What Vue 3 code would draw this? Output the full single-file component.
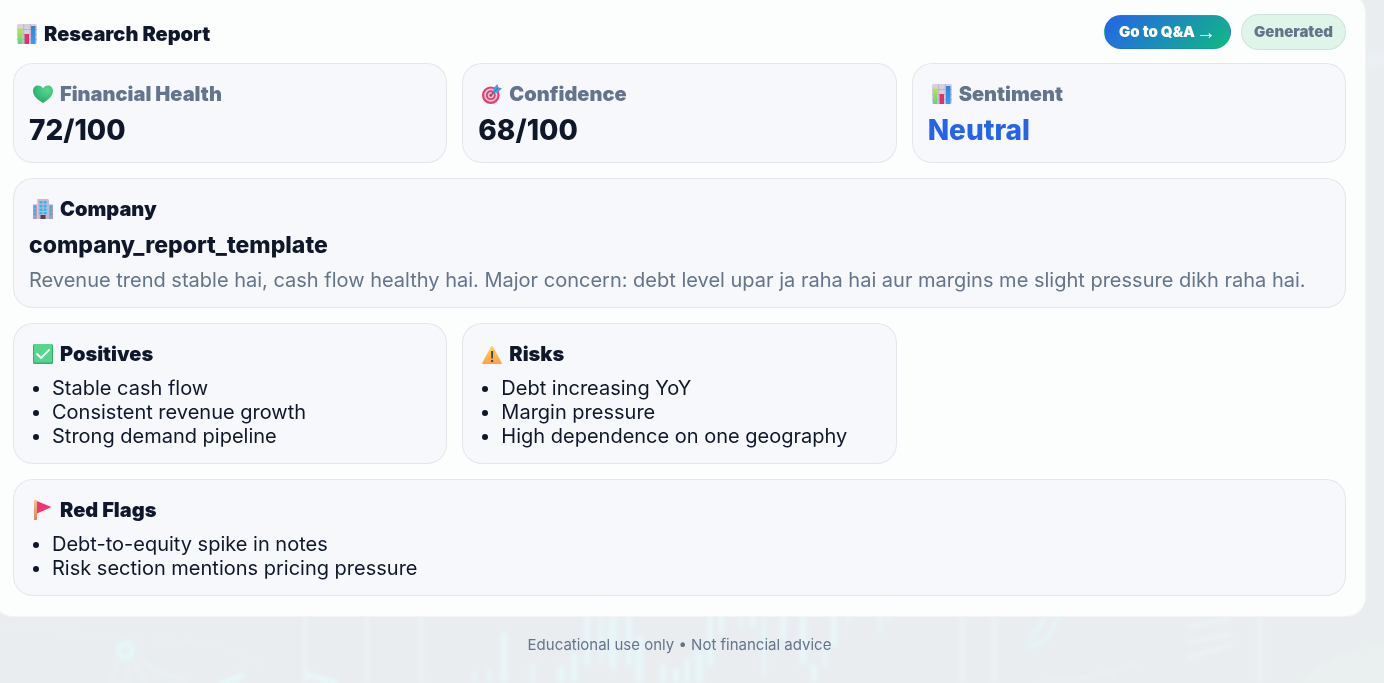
<script setup>
const metrics = [
  { icon: 'heart', label: 'Financial Health', value: '72/100' },
  { icon: 'target', label: 'Confidence', value: '68/100' },
  { icon: 'chart', label: 'Sentiment', value: 'Neutral', accent: true },
]
const lists = [
  { icon: 'check', title: 'Positives', items: ['Stable cash flow', 'Consistent revenue growth', 'Strong demand pipeline'] },
  { icon: 'warning', title: 'Risks', items: ['Debt increasing YoY', 'Margin pressure', 'High dependence on one geography'] },
  { icon: 'flag', title: 'Red Flags', items: ['Debt-to-equity spike in notes', 'Risk section mentions pricing pressure'], wide: true },
]
// x, top, height, width of each candlestick in the backdrop
const candles = [
  [474, 672, 11, 5], [489, 668, 15, 4], [504, 632, 51, 7], [533, 662, 21, 5], [561, 665, 18, 8], [574, 654, 29, 7],
  [587, 596, 70, 6], [601, 600, 64, 5], [613, 615, 55, 8], [629, 606, 60, 6], [639, 636, 47, 8], [663, 664, 19, 7],
  [676, 668, 15, 7], [687, 658, 25, 6], [699, 652, 31, 8], [710, 596, 70, 6], [721, 598, 36, 6], [741, 600, 30, 4],
  [753, 608, 20, 7], [764, 617, 60, 4], [783, 596, 44, 7], [803, 615, 50, 7], [814, 664, 19, 7], [825, 642, 26, 5],
  [834, 604, 42, 7], [880, 596, 36, 5], [848, 598, 24, 4], [890, 600, 22, 4],
]
</script>

<template>
  <div class="page">
    <svg class="defs" width="0" height="0" aria-hidden="true">
      <defs>
        <linearGradient id="gGreen" x1="0" y1="0" x2="0" y2="1"><stop offset="0" stop-color="#b5e550" /><stop offset="1" stop-color="#58d68d" /></linearGradient>
        <linearGradient id="gBlue" x1="0" y1="0" x2="0" y2="1"><stop offset="0" stop-color="#2b86d4" /><stop offset="1" stop-color="#3b9bf0" /></linearGradient>
        <radialGradient id="gHeart" cx="0.7" cy="0.25" r="0.8"><stop offset="0" stop-color="#5fd08a" /><stop offset="0.5" stop-color="#3fc380" /><stop offset="1" stop-color="#2ba66b" /></radialGradient>
        <linearGradient id="gWarn" x1="0" y1="0" x2="0" y2="1"><stop offset="0" stop-color="#fdd64b" /><stop offset="1" stop-color="#fda050" /></linearGradient>
        <linearGradient id="gPole" x1="0" y1="0" x2="0" y2="1"><stop offset="0" stop-color="#f7c09a" /><stop offset="1" stop-color="#dc8460" /></linearGradient>
        <symbol id="i-chart" viewBox="0 0 20 20">
          <rect width="20" height="20" rx="2" fill="#d8d0de" />
          <path d="M0 5.500h20M0 10.500h20M0 15.500h20M6.700 0v20M13.300 0v20" stroke="#b5a9bd" stroke-width=".7" />
          <rect x="1" y="4.500" width="4.500" height="15.500" fill="url(#gGreen)" />
          <rect x="7.500" y="10" width="4.500" height="10" fill="#e2306e" />
          <rect x="14" y="2" width="4.500" height="18" fill="url(#gBlue)" />
        </symbol>
        <symbol id="i-heart" viewBox="0 0 20 20">
          <path d="M10 19C5 16 0 12 0 7 0 3.500 2.400 1.500 5 1.500c2.200 0 4 1.100 5 3 1-1.900 2.800-3 5-3 2.600 0 5 2 5 5.500 0 5-5 9-10 12Z" fill="url(#gHeart)" />
        </symbol>
        <symbol id="i-target" viewBox="0 0 20 20">
          <circle cx="8.800" cy="11.200" r="8.800" fill="#e4406f" />
          <circle cx="8.800" cy="11.200" r="6.600" fill="#dcc9dc" />
          <circle cx="8.800" cy="11.200" r="4.900" fill="#e4406f" />
          <circle cx="8.800" cy="11.200" r="3" fill="#dcc9dc" />
          <circle cx="8.800" cy="11.200" r="1.500" fill="#d43a68" />
          <path d="M9 11l5-5" stroke="#4b5f8d" stroke-width="1.200" />
          <path d="M11.500 8.500V4.200L15.500 0l.8 3.500 3.700.8-4.200 4.200Z" fill="#3c9fe8" />
          <path d="M12.500 7.500l4-4" stroke="#2375c4" stroke-width=".8" />
        </symbol>
        <symbol id="i-building" viewBox="0 0 20 20">
          <path d="M0 5h5v15H0ZM15 5h5v15h-5Z" fill="#a99eb5" />
          <path d="M4 1.500Q4 0 5.500 0h9Q16 0 16 1.500V20H4Z" fill="#c2b9cb" />
          <path d="M0 5h4v1H0ZM16 5h4v1h-4ZM4 0h1v20H4Z" fill="#d7cedd" />
          <path d="M6.500 2h3v2.600h-3ZM10.600 2h3v2.600h-3ZM6.500 5.800h3v2.600h-3ZM10.600 5.800h3v2.600h-3ZM6.500 9.500h3v2.500h-3ZM10.600 9.500h3v2.500h-3ZM6.500 13h3v2.200h-3ZM10.600 13h3v2.200h-3ZM.800 7h2.200v2.200H.800ZM.800 10.500h2.200v2.200H.800ZM.800 14h2.200v2.200H.800ZM17 7h2.200v2.200H17ZM17 10.500h2.200v2.200H17ZM17 14h2.200v2.200H17Z" fill="#2fb7f5" />
          <rect x="7.500" y="16" width="5" height="4" fill="#5b4052" />
        </symbol>
        <symbol id="i-check" viewBox="0 0 20 20">
          <rect width="20" height="20" rx="1.500" fill="#3cab72" />
          <rect x="1" y="0" width="18" height="18.500" rx="1" fill="#55d68c" />
          <path d="M3.500 9.500l4.500 4.500L16.500 5.500" fill="none" stroke="#fff" stroke-width="1.800" />
        </symbol>
        <symbol id="i-warning" viewBox="0 0 20 20">
          <path d="M10 2Q10.600 2 11 2.700L19.800 19Q20 20 19.300 20H.7Q0 20 .2 19L9 2.700Q9.400 2 10 2Z" fill="url(#gWarn)" />
          <path d="M9 7h2.200l-.3 7.500H9.300ZM9.100 16h2v2h-2Z" fill="#4b4153" />
        </symbol>
        <symbol id="i-flag" viewBox="0 0 20 20">
          <path d="M3 .8L18.500 7 4 13.500Z" fill="#f5346d" />
          <rect x="1" y="0" width="3" height="20" rx=".6" fill="url(#gPole)" />
        </symbol>
      </defs>
    </svg>

    <svg class="backdrop" viewBox="0 0 1384 683" preserveAspectRatio="xMidYMax slice" aria-hidden="true">
      <defs><filter id="soft" x="-5%" y="-5%" width="110%" height="110%"><feGaussianBlur stdDeviation="2" /></filter></defs>
      <g filter="url(#soft)" fill="none">
        <path d="M1366 55q12-6 24-3v14l-24 2Z" fill="#edf1f5" opacity=".7" />
        <path d="M1290 700q20-50 110-58v60Z" fill="#e9f1ee" opacity=".7" />
        <path d="M305 600v83M367 600v83M421 600v83M962 600v83M994 600v83M1260 600v83" stroke="#eef3f6" stroke-width="5" opacity=".7" />
        <path d="M0 628q80 4 110 9t80 4q30 2 75 25" stroke="#ebf2f5" stroke-width="2" opacity=".6" />
        <circle cx="125.500" cy="651" r="7" stroke="#e5f8f9" stroke-width="5" />
        <path d="M119 661l-10 22M127 661l3 22M134 661l12 22M138 658q26 20 48 22" stroke="#ebf5f7" stroke-width="3" opacity=".7" />
        <path d="M220 683q12-2 25-9M306 674q12 5 32 8" stroke="#e8f8fa" stroke-width="5" />
        <path d="M1028 640q10-10 18-24M1028 649q10-8 18-9l14-24" stroke="#e6f6f9" stroke-width="4" opacity=".9" />
        <path d="M1187 627l45-9M1187 643l45-9M1187 658l45-13" stroke="#edf3f6" stroke-width="5" opacity=".8" />
        <path d="M1040 682q70-5 98-20M1110 677h8M1140 670h6" stroke="#eef2f5" stroke-width="3" opacity=".7" />
        <rect v-for="(c, i) in candles" :key="i" :x="c[0] - c[3] / 2" :y="c[1]" :width="c[3]" :height="c[2]" fill="#e9f8fa" opacity=".8" />
      </g>
    </svg>

    <main class="panel">
      <header class="head">
        <h1 class="title report-title"><svg class="icon"><use href="#i-chart" /></svg>Research Report</h1>
        <div class="actions">
          <button class="go" type="button">Go to Q&amp;A <span class="arrow">→</span></button>
          <span class="status">Generated</span>
        </div>
      </header>

      <div class="grid">
        <section v-for="m in metrics" :key="m.label" class="card">
          <h2 class="title muted"><svg class="icon"><use :href="'#i-' + m.icon" /></svg>{{ m.label }}</h2>
          <p class="value" :class="{ accent: m.accent }">{{ m.value }}</p>
        </section>

        <section class="card wide">
          <h2 class="title"><svg class="icon"><use href="#i-building" /></svg>Company</h2>
          <p class="company">company_report_template</p>
          <p class="summary">Revenue trend stable hai, cash flow healthy hai. Major concern: debt level upar ja raha hai aur margins me slight pressure dikh raha hai.</p>
        </section>

        <section v-for="l in lists" :key="l.title" class="card" :class="{ wide: l.wide }">
          <h2 class="title"><svg class="icon"><use :href="'#i-' + l.icon" /></svg>{{ l.title }}</h2>
          <ul class="list">
            <li v-for="item in l.items" :key="item">{{ item }}</li>
          </ul>
        </section>
      </div>
    </main>
    <footer class="foot">Educational use only • Not financial advice</footer>
  </div>
</template>

<style>
body {
  margin: 0;
  background: #e9edf0;
}
</style>

<style scoped>
.page {
  position: relative;
  box-sizing: border-box;
  min-height: 100vh;
  overflow: hidden;
  font-family: Inter, "Liberation Sans", sans-serif;
  font-size: 20px;
  line-height: 24px;
  color: #0f172a;
}
.defs {
  position: absolute;
}
.backdrop {
  position: absolute;
  inset: 0;
  width: 100%;
  height: 100%;
}
.panel {
  position: relative;
  margin: -7px 18px 0 -7px;
  padding: 20px 19px;
  border: 1px solid rgba(15, 23, 42, 0.04);
  border-radius: 20px;
  background: rgba(255, 255, 255, 0.86);
}
.head {
  display: flex;
  justify-content: space-between;
  align-items: center;
  margin-bottom: 13px;
}
.title {
  display: flex;
  align-items: center;
  gap: 7px;
  margin: 0;
  font-size: 20px;
  line-height: 30px;
  font-weight: 900;
}
.report-title {
  padding-top: 4px;
}
.muted {
  color: #64748b;
}
.icon {
  width: 20px;
  height: 20px;
  margin-left: 4px;
  flex: none;
}
.actions {
  display: flex;
  align-items: center;
  gap: 10px;
}
.go,
.status {
  box-sizing: border-box;
  border-radius: 999px;
  font-family: inherit;
  font-size: 15px;
  line-height: 18px;
  font-weight: 900;
}
.go {
  display: inline-flex;
  align-items: center;
  gap: 1px;
  padding: 7px 14px;
  border: 1px solid transparent;
  background: linear-gradient(135deg, #2563eb, #10b981);
  color: #fff;
}
.arrow {
  font-family: "Liberation Sans", sans-serif;
  font-size: 20px;
  font-weight: 400;
}
.status {
  padding: 8px 12px;
  border: 1px solid rgba(15, 23, 42, 0.08);
  background: #dff5e9;
  color: #64748b;
}
.grid {
  display: grid;
  grid-template-columns: repeat(3, minmax(0, 1fr));
  gap: 15px;
}
.card {
  padding: 15px;
  border: 1px solid rgba(15, 23, 42, 0.08);
  border-radius: 20px;
  background: #f6f8fc;
}
.wide {
  grid-column: 1 / -1;
}
.value {
  margin: 4px 0 0;
  font-size: 28px;
  line-height: 34px;
  font-weight: 800;
}
.accent {
  color: #2563eb;
}
.company {
  margin: 7px 0 9px;
  font-size: 23px;
  line-height: 28px;
  font-weight: 800;
}
.summary {
  margin: 0;
  color: #64748b;
}
.list {
  margin: 7px 0 0;
  padding-left: 23px;
}
.foot {
  position: relative;
  margin: 19px 18px 0 -7px;
  font-size: 15px;
  line-height: 18px;
  text-align: center;
  color: #64748b;
}
</style>
